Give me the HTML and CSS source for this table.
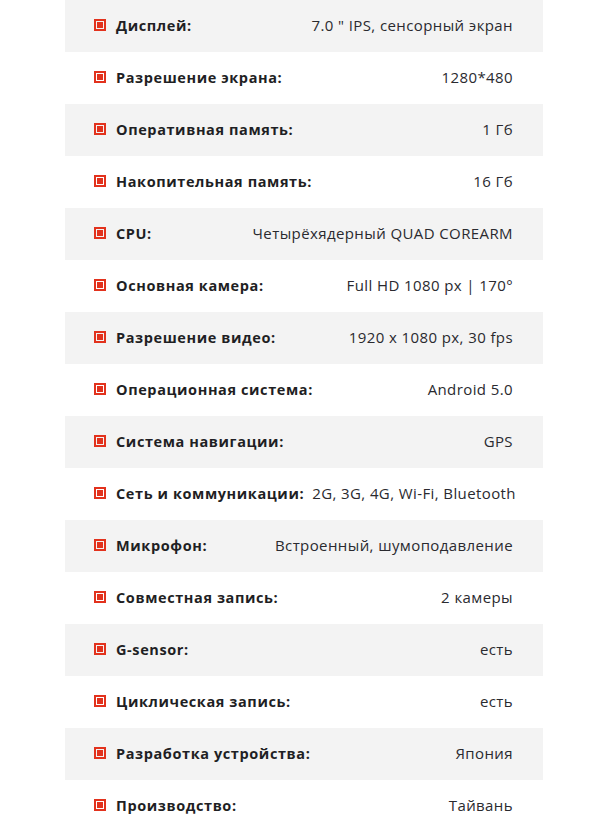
FILE: index.html
```html
<!DOCTYPE html>
<html lang="ru">
<head>
<meta charset="utf-8">
<link rel="stylesheet" href="styles.css">
</head>
<body>
<div class="specs">
  <div class="row"><span class="mark"></span><span class="label">Дисплей:</span><span class="value">7.0 " IPS, сенсорный экран</span></div>
  <div class="row"><span class="mark"></span><span class="label">Разрешение экрана:</span><span class="value">1280*480</span></div>
  <div class="row"><span class="mark"></span><span class="label">Оперативная память:</span><span class="value">1 Гб</span></div>
  <div class="row"><span class="mark"></span><span class="label">Накопительная память:</span><span class="value">16 Гб</span></div>
  <div class="row"><span class="mark"></span><span class="label">CPU:</span><span class="value">Четырёхядерный QUAD COREARM</span></div>
  <div class="row"><span class="mark"></span><span class="label">Основная камера:</span><span class="value">Full HD 1080 px | 170°</span></div>
  <div class="row"><span class="mark"></span><span class="label">Разрешение видео:</span><span class="value">1920 x 1080 px, 30 fps</span></div>
  <div class="row"><span class="mark"></span><span class="label">Операционная система:</span><span class="value">Android 5.0</span></div>
  <div class="row"><span class="mark"></span><span class="label">Система навигации:</span><span class="value">GPS</span></div>
  <div class="row"><span class="mark"></span><span class="label">Сеть и коммуникации:</span><span class="value">2G, 3G, 4G, Wi-Fi, Bluetooth</span></div>
  <div class="row"><span class="mark"></span><span class="label">Микрофон:</span><span class="value">Встроенный, шумоподавление</span></div>
  <div class="row"><span class="mark"></span><span class="label">Совместная запись:</span><span class="value">2 камеры</span></div>
  <div class="row"><span class="mark"></span><span class="label">G-sensor:</span><span class="value">есть</span></div>
  <div class="row"><span class="mark"></span><span class="label">Циклическая запись:</span><span class="value">есть</span></div>
  <div class="row"><span class="mark"></span><span class="label">Разработка устройства:</span><span class="value">Япония</span></div>
  <div class="row"><span class="mark"></span><span class="label">Производство:</span><span class="value">Тайвань</span></div>
</div>
</body>
</html>
```
FILE: styles.css
```css
html, body {
  margin: 0;
  padding: 0;
  background: #fff;
}
body {
  font-family: "Open Sans", "DejaVu Sans", sans-serif;
}
.specs {
  width: 478px;
  margin-left: 65px;
  display: flex;
  flex-direction: column;
}
.row {
  height: 52px;
  display: flex;
  align-items: center;
  padding: 0 30px 2px 29px;
  box-sizing: border-box;
}
.row:nth-child(odd) {
  background: #f3f3f3;
}
.mark {
  width: 12px;
  height: 12px;
  box-sizing: border-box;
  border: 2px solid #e2321d;
  flex: none;
  display: flex;
  align-items: center;
  justify-content: center;
  margin-right: 10px;
}
.mark::before {
  content: "";
  width: 6px;
  height: 6px;
  background: #e2321d;
}
.label {
  font-weight: 700;
  font-size: 14.5px;
  letter-spacing: 0.6px;
  color: #1f1f24;
  white-space: nowrap;
}
.value {
  margin-left: auto;
  padding-left: 8px;
  font-size: 15px;
  letter-spacing: 0.4px;
  color: #2a2a2f;
  white-space: nowrap;
  text-align: right;
}
```
